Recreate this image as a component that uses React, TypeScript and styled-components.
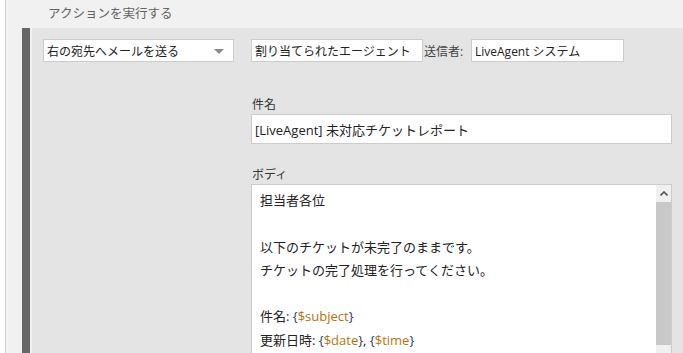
import React from 'react';
import styled, { createGlobalStyle } from 'styled-components';

const GlobalStyle = createGlobalStyle`
  html, body {
    margin: 0;
    padding: 0;
    background: #fff;
    overflow: hidden;
  }

  body {
    font-family: 'Open Sans', 'Noto Sans CJK JP', sans-serif;
    color: #222;
  }
`;

type Token = { text: string; kind?: 'brace' | 'var' };

const bodyLines: Token[][] = [
  [{ text: '担当者各位' }],
  [],
  [{ text: '以下のチケットが未完了のままです。' }],
  [{ text: 'チケットの完了処理を行ってください。' }],
  [],
  [
    { text: '件名: ' },
    { text: '{', kind: 'brace' },
    { text: '$subject', kind: 'var' },
    { text: '}', kind: 'brace' },
  ],
  [
    { text: '更新日時: ' },
    { text: '{', kind: 'brace' },
    { text: '$date', kind: 'var' },
    { text: '}', kind: 'brace' },
    { text: ', ' },
    { text: '{', kind: 'brace' },
    { text: '$time', kind: 'var' },
    { text: '}', kind: 'brace' },
  ],
];

export default function App() {
  return (
    <>
      <GlobalStyle />
      <Page>
        <Panel>
          <PanelHeader>アクションを実行する</PanelHeader>
          <ActionRow>
            <ActionBar />
            <ActionBody>
              <TopRow>
                <Select>
                  <span>右の宛先へメールを送る</span>
                  <SelectArrow />
                </Select>
                <TextBox width={172}>割り当てられたエージェント</TextBox>
                <InlineLabel>送信者:</InlineLabel>
                <TextBox width={153}>LiveAgent システム</TextBox>
              </TopRow>

              <Fields>
                <Field>
                  <FieldLabel>件名</FieldLabel>
                  <WideBox>[LiveAgent] 未対応チケットレポート</WideBox>
                </Field>

                <Field>
                  <FieldLabel>ボディ</FieldLabel>
                  <TextArea>
                    <TextContent>
                      {bodyLines.map((line, i) => (
                        <Line key={i}>
                          {line.length === 0
                            ? '\u00a0'
                            : line.map((t, j) => (
                                <Tok key={j} kind={t.kind}>
                                  {t.text}
                                </Tok>
                              ))}
                        </Line>
                      ))}
                    </TextContent>
                    <ScrollBar>
                      <ScrollButton>
                        <svg width="8" height="5" viewBox="0 0 8 5">
                          <path d="M0.5 4.5 L4 1 L7.5 4.5" fill="none" stroke="#555" strokeWidth="1.6" />
                        </svg>
                      </ScrollButton>
                      <ScrollThumb />
                      <ScrollTrack />
                    </ScrollBar>
                  </TextArea>
                </Field>
              </Fields>
            </ActionBody>
          </ActionRow>
        </Panel>
      </Page>
    </>
  );
}

const Page = styled.div`
  display: flex;
  height: 100vh;
  padding-left: 5px;
  box-sizing: border-box;
`;

const Panel = styled.div`
  flex: 1;
  display: flex;
  flex-direction: column;
  background: #f1f1f1;
  border-left: 1px solid #d2d2d2;
`;

const PanelHeader = styled.div`
  height: 28px;
  line-height: 28px;
  padding-left: 42px;
  font-size: 12.5px;
  color: #626262;
  box-sizing: border-box;
`;

const ActionRow = styled.div`
  flex: 1;
  display: flex;
  padding-left: 16px;
`;

const ActionBar = styled.div`
  width: 8px;
  background: #666;
  margin-right: 2px;
`;

const ActionBody = styled.div`
  flex: 1;
  background: #e4e4e4;
  padding: 11px 11px 0 11px;
`;

const TopRow = styled.div`
  display: flex;
  align-items: center;
`;

const Select = styled.div`
  width: 191px;
  height: 23px;
  box-sizing: border-box;
  background: #fff;
  border: 1px solid #ccc;
  display: flex;
  align-items: center;
  justify-content: space-between;
  padding: 0 9px 0 3px;
  margin-right: 17px;
  font-size: 12px;
`;

const SelectArrow = styled.span`
  width: 0;
  height: 0;
  border-left: 5px solid transparent;
  border-right: 5px solid transparent;
  border-top: 5px solid #8a8a8a;
  margin-top: 2px;
`;

const TextBox = styled.div<{ width: number }>`
  width: ${({ width }) => `${width}px`};
  height: 23px;
  box-sizing: border-box;
  background: #fff;
  border: 1px solid #ccc;
  display: flex;
  align-items: center;
  padding: 0 3px;
  font-size: 12px;
  white-space: nowrap;
  overflow: hidden;
`;

const InlineLabel = styled.span`
  font-size: 12px;
  color: #444;
  padding: 0 2px 0 1px;
  width: 48px;
  box-sizing: border-box;
`;

const Fields = styled.div`
  margin-left: 208px;
  padding-top: 34px;
  display: flex;
  flex-direction: column;
  gap: 22px;
`;

const Field = styled.div`
  display: flex;
  flex-direction: column;
`;

const FieldLabel = styled.label`
  font-size: 12px;
  line-height: 18px;
  color: #333;
  padding-left: 1px;
`;

const WideBox = styled.div`
  height: 30px;
  box-sizing: border-box;
  background: #fff;
  border: 1px solid #ccc;
  display: flex;
  align-items: center;
  padding: 0 3px;
  font-size: 13px;
`;

const TextArea = styled.div`
  height: 240px;
  box-sizing: border-box;
  background: #fff;
  border: 1px solid #ccc;
  display: flex;
`;

const TextContent = styled.div`
  flex: 1;
  padding: 4px 8px;
  font-size: 13px;
  line-height: 23.3px;
`;

const Line = styled.div`
  white-space: nowrap;
`;

const Tok = styled.span<{ kind?: 'brace' | 'var' }>`
  color: ${({ kind }) => (kind === 'var' ? '#b8730a' : kind === 'brace' ? '#1d3c6e' : 'inherit')};
`;

const ScrollBar = styled.div`
  width: 15px;
  display: flex;
  flex-direction: column;
  background: #f0f0f0;
`;

const ScrollButton = styled.div`
  height: 17px;
  display: flex;
  align-items: center;
  justify-content: center;
`;

const ScrollThumb = styled.div`
  height: 143px;
  background: #c8c8c8;
`;

const ScrollTrack = styled.div`
  flex: 1;
`;
